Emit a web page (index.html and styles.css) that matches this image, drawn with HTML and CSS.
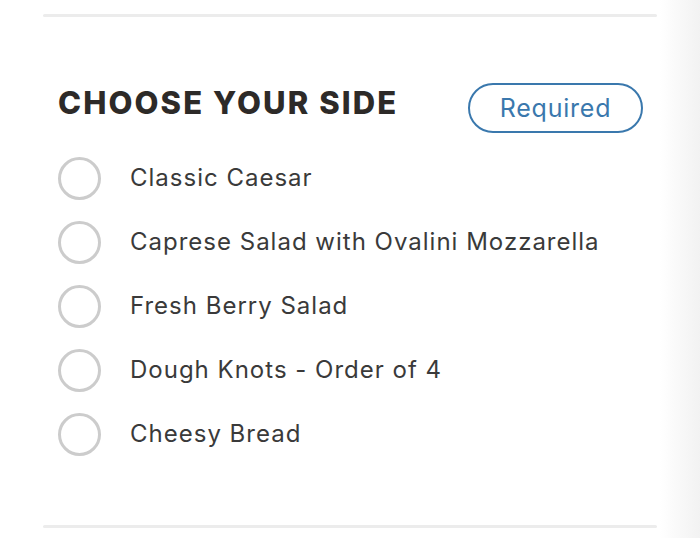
FILE: index.html
```html
<!DOCTYPE html>
<html lang="en">
    <head>
        <meta charset="UTF-8">
        <title>Choose your side</title>
        <link rel="stylesheet" href="styles.css">
    </head>
    <body>
        <div class="sheet">
            <div class="rule"></div>
            <div class="group">
                <div class="group-head">
                    <h2 class="group-title">CHOOSE YOUR SIDE</h2>
                    <span class="badge">Required</span>
                </div>
                <ul class="options">
                    <li class="option">
                        <span class="radio"></span>
                        <span class="label">Classic Caesar</span>
                    </li>
                    <li class="option">
                        <span class="radio"></span>
                        <span class="label">Caprese Salad with Ovalini Mozzarella</span>
                    </li>
                    <li class="option">
                        <span class="radio"></span>
                        <span class="label">Fresh Berry Salad</span>
                    </li>
                    <li class="option">
                        <span class="radio"></span>
                        <span class="label">Dough Knots - Order of 4</span>
                    </li>
                    <li class="option">
                        <span class="radio"></span>
                        <span class="label">Cheesy Bread</span>
                    </li>
                </ul>
            </div>
            <div class="rule"></div>
        </div>
    </body>
</html>
```

FILE: styles.css
```css
*{
    margin: 0;
    padding: 0;
    box-sizing: border-box;
}
ul{
    list-style: none;
}
html,body{
    width: 100%;
    height: 100%;
}
body{
    font-family: "Inter", "Liberation Sans", sans-serif;
    color: #3a3a3a;
    background: linear-gradient(to right, #fff 0, #fff 660px, #f2f2f2 100%);
}
.sheet{
    width: 614px;
    margin-left: 43px;
    padding-top: 14px;
}
.rule{
    height: 3px;
    background-color: #ececec;
    border-radius: 2px;
}
.group{
    padding: 66px 14px 59px 15px;
}
.group-head{
    display: flex;
    align-items: center;
    justify-content: space-between;
    height: 50px;
}
.group-title{
    font-size: 31px;
    font-weight: 800;
    color: #2d2a28;
    letter-spacing: 2.1px;
    margin-top: -12px;
}
.badge{
    display: flex;
    align-items: center;
    justify-content: center;
    width: 175px;
    height: 50px;
    border: 2px solid #3a78ad;
    border-radius: 25px;
    color: #3a78ad;
    font-size: 25px;
    letter-spacing: 0.8px;
}
.options{
    margin-top: 13px;
}
.option{
    display: flex;
    align-items: center;
    height: 64px;
}
.radio{
    width: 43px;
    height: 43px;
    border: 3px solid #cccccc;
    border-radius: 50%;
    flex-shrink: 0;
}
.label{
    margin-left: 29px;
    font-size: 24px;
    letter-spacing: 1px;
    margin-top: -1px;
}
```
